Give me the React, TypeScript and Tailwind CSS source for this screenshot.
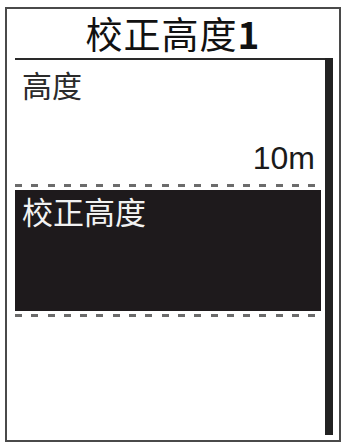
export default function App() {
  const font = { fontFamily: '"Noto Sans CJK SC", "Noto Sans", sans-serif' }
  const dash = 'h-[3px] w-[306px] bg-[repeating-linear-gradient(to_right,#6b6b6b_0_7px,transparent_7px_16.3px)]'

  return (
    <div className="w-[343px] h-[443px] bg-white pt-[7px] pl-[5px]" style={font}>
      <div className="w-[336px] h-[435px] border-2 border-[#4a4a4a] flex flex-col">
        {/* title */}
        <div className="h-[49px] flex items-center justify-center text-[37px] font-normal text-[#111] leading-none tracking-[1px]">
          校正高度<span className="font-bold">1</span>
        </div>

        <div className="flex flex-1 pl-[8px] pr-[6px] pb-[5px]">
          <div className="flex-1 border-t-[2px] border-[#2a2a2a] flex flex-col pr-[4px]">
            {/* altitude row */}
            <div className="h-[124px] flex flex-col pl-[7px] pr-[6px]">
              <div className="mt-[6px] text-[30px] leading-[36px] text-[#2b2b2b]">高度</div>
              <div className="mt-auto mb-[8px] self-end text-[32px] leading-[36px] text-[#1a1a1a]" style={{ fontFamily: '"Liberation Sans", Arial, sans-serif' }}>
                10m
              </div>
            </div>
            <div className={dash} />

            {/* selected item */}
            <div className="mt-[3px] h-[121px] bg-[#1e1a1c] pl-[7px] pt-[3px]">
              <div className="text-[31px] leading-[36px] text-[#f2f2f2]">校正高度</div>
            </div>
            <div className={`mt-[3px] ${dash}`} />
          </div>

          {/* scrollbar */}
          <div className="w-[8px] bg-[#222]" />
        </div>
      </div>
    </div>
  )
}
